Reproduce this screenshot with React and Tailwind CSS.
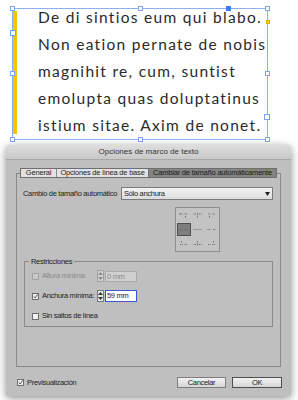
import React from 'react';

const lines = [
  'De di sintios eum qui blabo.',
  'Non eation pernate de nobis',
  'magnihit re, cum, suntist',
  'emolupta quas doluptatinus',
  'istium sitae. Axim de nonet.',
];

function Handle({ className }) {
  return <div className={`absolute bg-white border border-[#7ea3ee] ${className}`}></div>;
}

function Checkbox({ checked, disabled }) {
  return (
    <div
      className={`w-[7px] h-[7px] shrink-0 border flex items-center justify-center ${
        disabled ? 'border-[#a4a4a4] bg-[#c8c8c8]' : 'border-[#6f6f6f] bg-[#f2f2f2]'
      }`}
    >
      {checked && (
        <svg width="7" height="7" viewBox="0 0 7 7">
          <path d="M1 3.5 L3 5.5 L6.5 0.5" stroke="#222" strokeWidth="1.1" fill="none" />
        </svg>
      )}
    </div>
  );
}

function Stepper({ disabled }) {
  const c = disabled ? '#8a8a8a' : '#333';
  return (
    <div className={`w-[7px] h-[12px] shrink-0 border flex flex-col items-center justify-around ${disabled ? 'border-[#a0a0a0] bg-[#d2d2d2]' : 'border-[#777] bg-[#e8e8e8]'}`}>
      <svg width="5" height="3" viewBox="0 0 5 3"><path d="M0 3 L2.5 0 L5 3Z" fill={c} /></svg>
      <svg width="5" height="3" viewBox="0 0 5 3"><path d="M0 0 L2.5 3 L5 0Z" fill={c} /></svg>
    </div>
  );
}

function Arrow({ d }) {
  return (
    <svg width="9" height="7" viewBox="0 0 9 7">
      <path d={d} stroke="#555" strokeWidth="0.8" fill="none" strokeDasharray="1 0.6" />
    </svg>
  );
}

const cellIcons = [
  'M1 2 L3.5 2 M1 1 L1 3 M5.5 2 L8 2 M6.5 4 L6.5 6',
  'M0.5 2 L3 2 M6 2 L8.5 2 M4.5 1 L4.5 6',
  'M1 2 L3.5 2 M5.5 2 L8 2 M2.5 4 L2.5 6',
  'M0.5 3.5 L3.5 3.5 M5.5 3.5 L8.5 3.5',
  'M0.5 3.5 L2.5 3.5 M3.5 3.5 L5.5 3.5 M6.5 3.5 L8.5 3.5',
  'M0.5 3.5 L3 3.5 M6 3.5 L8.5 3.5',
  'M1 4.5 L3.5 4.5 M5.5 4.5 L8 4.5 M2.5 1 L2.5 3',
  'M0.5 4.5 L3 4.5 M6 4.5 L8.5 4.5 M4.5 1 L4.5 6',
  'M1 4.5 L3.5 4.5 M5.5 4.5 L8 4.5 M6.5 1 L6.5 3',
];

export default function App() {
  return (
    <div className="w-[298px] h-[400px] bg-white overflow-hidden font-['Liberation_Sans',sans-serif] text-[#1a1a1a]">
      {/* text frame on canvas */}
      <div className="relative ml-[12px] mt-[8px] w-[256px] h-[132px] border border-[#8fb0f0]">
        <div className="absolute left-[0px] top-[2px] w-[4px] h-[123px] bg-[#f5c400]"></div>
        <div className="-mt-[5px] pl-[25px] font-['Lato',sans-serif] text-[15.5px] leading-[27px] tracking-[1.3px] text-[#2a2a2a] whitespace-nowrap">
          {lines.map((l) => (
            <div key={l}>{l}</div>
          ))}
        </div>
        <Handle className="-left-[3px] -top-[3px] w-[5px] h-[5px]" />
        <Handle className="left-[125px] -top-[3px] w-[5px] h-[5px]" />
        <Handle className="-right-[3px] -top-[3px] w-[5px] h-[5px]" />
        <div className="absolute left-[213px] -top-[3px] w-[5px] h-[5px] bg-[#3d7cf0]"></div>
        <div className="absolute -right-[3px] top-[11px] w-[4px] h-[4px] bg-[#f5d200] border border-[#d8b200]"></div>
        <Handle className="-left-[3px] top-[21px] w-[6px] h-[6px]" />
        <Handle className="-left-[3px] top-[62px] w-[5px] h-[5px]" />
        <Handle className="-right-[3px] top-[62px] w-[5px] h-[5px]" />
        <Handle className="-right-[3px] top-[105px] w-[6px] h-[6px]" />
        <Handle className="-left-[3px] -bottom-[3px] w-[5px] h-[5px]" />
        <Handle className="left-[125px] -bottom-[3px] w-[5px] h-[5px]" />
        <Handle className="-right-[3px] -bottom-[3px] w-[5px] h-[5px]" />
      </div>

      {/* dialog */}
      <div className="ml-[6px] mt-[5px] w-[285px] h-[251px] rounded-t-[5px] bg-[#bfbfbf] shadow-[0_2px_8px_rgba(0,0,0,0.45)] flex flex-col text-[7.5px] tracking-[-0.3px] whitespace-nowrap text-[#222]">
        <div className="h-[15px] rounded-t-[5px] bg-gradient-to-b from-[#dedede] to-[#c9c9c9] border-b border-[#a8a8a8] flex items-center justify-center text-[8px] tracking-[0px] text-[#333]">
          Opciones de marco de texto
        </div>

        <div className="mx-[10px] mt-[13px] h-[194px] border border-[#8a8a8a] flex flex-col">
          <div className="-mt-[6px] mx-auto flex h-[10px] border border-[#6e6e6e] bg-[#e2e2e2] text-[7.5px] tracking-[-0.2px] leading-[8px]">
            <div className="w-[36px] flex items-center justify-center border-r border-[#8a8a8a]">General</div>
            <div className="w-[92px] flex items-center justify-center border-r border-[#6e6e6e]">Opciones de línea de base</div>
            <div className="w-[127px] flex items-center justify-center bg-[#848484] text-[#1a1a1a]">Cambiar de tamaño automáticamente</div>
          </div>

          <div className="mt-[9px] ml-[6px] flex items-center gap-[2px]">
            <span className="w-[96px]">Cambio de tamaño automático</span>
            <div className="w-[152px] h-[13px] border border-[#7a7a7a] bg-gradient-to-b from-[#f4f4f4] to-[#dcdcdc] flex items-center justify-between px-[2px]">
              <span>Sólo anchura</span>
              <svg width="5" height="4" viewBox="0 0 5 4"><path d="M0 0 L5 0 L2.5 4Z" fill="#222" /></svg>
            </div>
          </div>

          <div className="mt-[7px] ml-[158px] w-[45px] h-[45px] border border-[#8e8e8e] bg-[#c3c3c3] grid grid-cols-3 grid-rows-3 p-[1px]">
            {cellIcons.map((d, i) => (
              <div
                key={i}
                className={`flex items-center justify-center ${
                  i === 3 ? 'bg-[#7e7e7e] border border-[#505050]' : ''
                }`}
              >
                <Arrow d={d} />
              </div>
            ))}
          </div>

          <div className="mt-[9px] mx-[7px] h-[66px] border border-[#8a8a8a] flex flex-col">
            <div className="-mt-[5px] ml-[4px] px-[2px] w-fit bg-[#bfbfbf] leading-[9px]">Restricciones</div>
            <div className="mt-[4px] ml-[7px] flex items-center h-[12px] text-[#8a8a8a]">
              <Checkbox disabled />
              <span className="ml-[3px] w-[55px]">Altura mínima:</span>
              <Stepper disabled />
              <div className="ml-[1px] w-[32px] h-[11px] bg-[#d0d0d0] border border-[#aaa] px-[1px] leading-[9px]">0 mm</div>
            </div>
            <div className="mt-[8px] ml-[7px] flex items-center h-[12px]">
              <Checkbox checked />
              <span className="ml-[3px] w-[55px]">Anchura mínima:</span>
              <Stepper />
              <div className="ml-[1px] w-[32px] h-[12px] bg-white border-[1.5px] border-[#3a5bd0] px-[1px] leading-[9px]">59 mm</div>
            </div>
            <div className="mt-[8px] ml-[7px] flex items-center h-[12px]">
              <Checkbox />
              <span className="ml-[3px]">Sin saltos de línea</span>
            </div>
          </div>
        </div>

        <div className="mt-[10px] ml-[11px] mr-[9px] flex items-center">
          <Checkbox checked />
          <span className="ml-[3px]">Previsualización</span>
          <div className="ml-auto w-[49px] h-[11px] border border-[#7e7e7e] bg-gradient-to-b from-[#f2f2f2] to-[#d6d6d6] flex items-center justify-center">Cancelar</div>
          <div className="ml-[6px] w-[50px] h-[11px] border border-[#4e4e4e] bg-gradient-to-b from-[#f2f2f2] to-[#d6d6d6] flex items-center justify-center">OK</div>
        </div>
      </div>
    </div>
  );
}
